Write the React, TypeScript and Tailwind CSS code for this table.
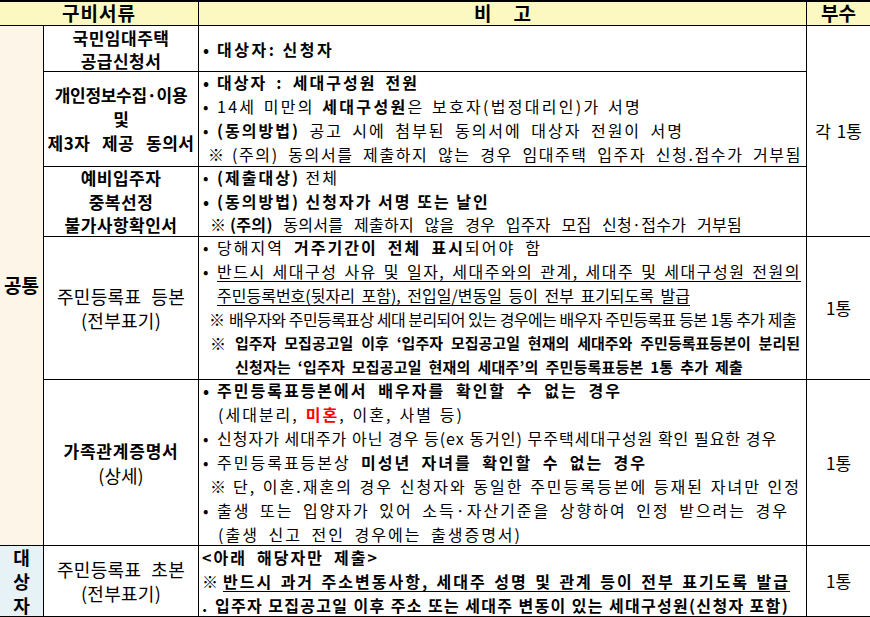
const J = "whitespace-nowrap text-justify [text-align-last:justify]";

type LnProps = { c?: string; p?: string; pw?: string; t?: string; children: React.ReactNode };

// one line of the notes column: optional fixed-width prefix (bullet / ※), justified body
const Ln = ({ c = "", p, pw = "", t = "", children }: LnProps) => (
  <div className={`flex whitespace-nowrap ${c}`}>
    {p && <span className={`shrink-0 tracking-[0px] ${pw}`}>{p}</span>}
    <div className={`${J} flex-1 min-w-0 ${t}`}>{children}</div>
  </div>
);

const Doc = ({ c = "", children }: { c?: string; children: React.ReactNode }) => (
  <div className={`whitespace-nowrap text-center ${c}`}>{children}</div>
);

const cell = "border-b border-r border-black";
const notes = "text-[16px] tracking-[2px] flex flex-col justify-center";

export default function App() {
  return (
    <div className="w-[870px] h-[617px] bg-white text-black font-['Noto_Sans_CJK_KR','Noto_Sans',sans-serif] overflow-hidden">
      <div className="border-t-2 border-black grid grid-cols-[44px_155px_608px_63px] grid-rows-[24px_46px_95px_70px_143px_166px_71px]">
        {/* header */}
        <div className={`col-start-1 col-span-2 row-start-1 bg-[#fbf8c1] ${cell} flex items-center justify-center text-[19px] font-bold tracking-[1px]`}>
          구비서류
        </div>
        <div className={`col-start-3 row-start-1 bg-[#fbf8c1] ${cell} flex items-center justify-center gap-[22px] text-[19px] font-bold`}>
          <span>비</span>
          <span>고</span>
        </div>
        <div className="col-start-4 row-start-1 bg-[#fbf8c1] border-b border-black flex items-center justify-center text-[19px] font-bold">
          부수
        </div>

        {/* category */}
        <div className={`col-start-1 row-start-2 row-span-5 bg-[#fdf6e8] ${cell} flex items-center justify-center text-[19px] font-bold`}>
          공통
        </div>
        <div className={`col-start-1 row-start-7 bg-[#e6f2f5] ${cell} flex flex-col items-center justify-center text-[18px] font-bold leading-[24px]`}>
          <span>대</span>
          <span>상</span>
          <span>자</span>
        </div>

        {/* documents */}
        <div className={`col-start-2 row-start-2 ${cell} flex flex-col items-center justify-center text-[17px] font-semibold leading-[23px]`}>
          <Doc c="tracking-[0.5px]">국민임대주택</Doc>
          <Doc c="tracking-[0.5px]">공급신청서</Doc>
        </div>
        <div className={`col-start-2 row-start-3 ${cell} flex flex-col items-center justify-center text-[17px] font-bold leading-[24px]`}>
          <Doc c="tracking-[-0.3px]">개인정보수집·이용</Doc>
          <Doc>및</Doc>
          <div className={`${J} w-[147px] tracking-[0.5px]`}>제3자 제공 동의서</div>
        </div>
        <div className={`col-start-2 row-start-4 ${cell} flex flex-col items-center justify-center text-[17px] font-semibold leading-[23.5px]`}>
          <Doc c="tracking-[0.5px]">예비입주자</Doc>
          <Doc c="tracking-[0.5px]">중복선정</Doc>
          <Doc c="tracking-[0.5px]">불가사항확인서</Doc>
        </div>
        <div className={`col-start-2 row-start-5 ${cell} flex flex-col items-center justify-center text-[18px] leading-[24px]`}>
          <div className={`${J} w-[128px] tracking-[0.3px]`}>주민등록표 등본</div>
          <Doc c="tracking-[0.3px]">(전부표기)</Doc>
        </div>
        <div className={`col-start-2 row-start-6 ${cell} flex flex-col items-center justify-center leading-[24px]`}>
          <Doc c="font-bold text-[17px] tracking-[0.8px]">가족관계증명서</Doc>
          <Doc c="text-[18px]">(상세)</Doc>
        </div>
        <div className={`col-start-2 row-start-7 ${cell} flex flex-col items-center justify-center text-[18px] leading-[24px]`}>
          <div className={`${J} w-[128px] tracking-[0.3px]`}>주민등록표 초본</div>
          <Doc c="tracking-[0.3px]">(전부표기)</Doc>
        </div>

        {/* notes */}
        <div className={`col-start-3 row-start-2 ${cell} ${notes} leading-[24px]`}>
          <Ln c="ml-[4px] w-[129px] font-bold" p="•" pw="w-[14px]" t="tracking-[2.5px]">대상자: 신청자</Ln>
        </div>
        <div className={`col-start-3 row-start-3 ${cell} ${notes} leading-[24px] pb-[2px]`}>
          <Ln c="ml-[4px] w-[216px] font-bold" p="•" pw="w-[14px]">대상자 : 세대구성원 전원</Ln>
          <Ln c="ml-[4px] w-[439px]" p="•" pw="w-[14px]" t="tracking-[2.3px]">
            14세 미만의 <b>세대구성원</b>은 보호자(법정대리인)가 서명
          </Ln>
          <Ln c="ml-[4px] w-[481px]" p="•" pw="w-[14px]">
            <b>(동의방법)</b> 공고 시에 첨부된 동의서에 대상자 전원이 서명
          </Ln>
          <Ln c="ml-[9px] w-[594px]" p="※" pw="w-[24px]" t="tracking-[1.6px]">
            (주의) 동의서를 제출하지 않는 경우 임대주택 입주자 신청.접수가 거부됨
          </Ln>
        </div>
        <div className={`col-start-3 row-start-4 ${cell} ${notes} leading-[23.5px]`}>
          <Ln c="ml-[4px] w-[136px]" p="•" pw="w-[14px]">
            <b>(제출대상)</b> 전체
          </Ln>
          <Ln c="ml-[4px] w-[284px] font-bold" p="•" pw="w-[14px]">
            (동의방법) 신청자가 서명 또는 날인
          </Ln>
          <Ln c="ml-[11px] w-[532px]" p="※" pw="w-[20px]" t="tracking-[0.3px]">
            <b>(주의)</b> 동의서를 제출하지 않을 경우 입주자 모집 신청·접수가 거부됨
          </Ln>
        </div>
        <div className={`col-start-3 row-start-5 ${cell} ${notes} leading-[24px] pb-[2px]`}>
          <Ln c="ml-[4px] w-[339px]" p="•" pw="w-[14px]">
            당해지역 <b>거주기간이 전체 표시</b>되어야 함
          </Ln>
          <Ln c="ml-[4px] w-[598px]" p="•" pw="w-[14px]" t="underline underline-offset-[3px] tracking-[1.5px]">
            반드시 세대구성 사유 및 일자, 세대주와의 관계, 세대주 및 세대구성원 전원의
          </Ln>
          <Ln c="ml-[18px] w-[473px]" t="underline underline-offset-[3px] tracking-[0px]">
            주민등록번호(뒷자리 포함), 전입일/변동일 등이 전부 표기되도록 발급
          </Ln>
          <Ln c="ml-[10px] w-[587px]" p="※" pw="w-[20px]" t="tracking-[-0.6px]">
            배우자와 주민등록표상 세대 분리되어 있는 경우에는 배우자 주민등록표 등본 1통 추가 제출
          </Ln>
          <Ln c="ml-[11px] w-[590px] font-bold" p="※" pw="w-[25px]" t="text-[15px] tracking-[0px]">
            입주자 모집공고일 이후 ‘입주자 모집공고일 현재의 세대주와 주민등록표등본이 분리된
          </Ln>
          <Ln c="ml-[36px] w-[508px] font-bold" t="text-[15px] tracking-[0.2px]">
            신청자는 ‘입주자 모집공고일 현재의 세대주’의 주민등록표등본 1통 추가 제출
          </Ln>
        </div>
        <div className={`col-start-3 row-start-6 ${cell} ${notes} leading-[24px] pb-[2px]`}>
          <Ln c="ml-[4px] w-[419px] font-bold" p="•" pw="w-[14px]">주민등록표등본에서 배우자를 확인할 수 없는 경우</Ln>
          <Ln c="ml-[19px] w-[246px]">
            (세대분리, <b className="text-[#ff0000]">미혼</b>, 이혼, 사별 등)
          </Ln>
          <Ln c="ml-[4px] w-[565px]" p="•" pw="w-[14px]" t="tracking-[1px]">
            신청자가 세대주가 아닌 경우 등(ex 동거인) 무주택세대구성원 확인 필요한 경우
          </Ln>
          <Ln c="ml-[4px] w-[444px]" p="•" pw="w-[14px]">
            주민등록표등본상 <b>미성년 자녀를 확인할 수 없는 경우</b>
          </Ln>
          <Ln c="ml-[11px] w-[591px]" p="※" pw="w-[23px]">
            단, 이혼.재혼의 경우 신청자와 동일한 주민등록등본에 등재된 자녀만 인정
          </Ln>
          <Ln c="ml-[4px] w-[586px]" p="•" pw="w-[14px]">
            출생 또는 입양자가 있어 소득·자산기준을 상향하여 인정 받으려는 경우
          </Ln>
          <Ln c="ml-[19px] w-[304px]">(출생 신고 전인 경우에는 출생증명서)</Ln>
        </div>
        <div className={`col-start-3 row-start-7 ${cell} ${notes} leading-[24px] font-bold`}>
          <Ln c="ml-[3px] w-[177px]" t="tracking-[2px]">&lt;아래 해당자만 제출&gt;</Ln>
          <Ln c="ml-[3px] w-[588px]" p="※" pw="w-[21px]" t="underline underline-offset-[3px]">
            반드시 과거 주소변동사항, 세대주 성명 및 관계 등이 전부 표기도록 발급
          </Ln>
          <Ln c="ml-[3px] w-[587px]" p="." pw="w-[13px]" t="tracking-[1.3px]">
            입주자 모집공고일 이후 주소 또는 세대주 변동이 있는 세대구성원(신청자 포함)
          </Ln>
        </div>

        {/* copies */}
        <div className="col-start-4 row-start-2 row-span-3 border-b border-black flex items-center justify-center text-[17px] gap-[6px]">
          <span>각</span>
          <span>1통</span>
        </div>
        <div className="col-start-4 row-start-5 border-b border-black flex items-center justify-center text-[17px]">
          1통
        </div>
        <div className="col-start-4 row-start-6 border-b border-black flex items-center justify-center text-[17px]">
          1통
        </div>
        <div className="col-start-4 row-start-7 border-b border-black flex items-center justify-center text-[17px]">
          1통
        </div>
      </div>
    </div>
  );
}
